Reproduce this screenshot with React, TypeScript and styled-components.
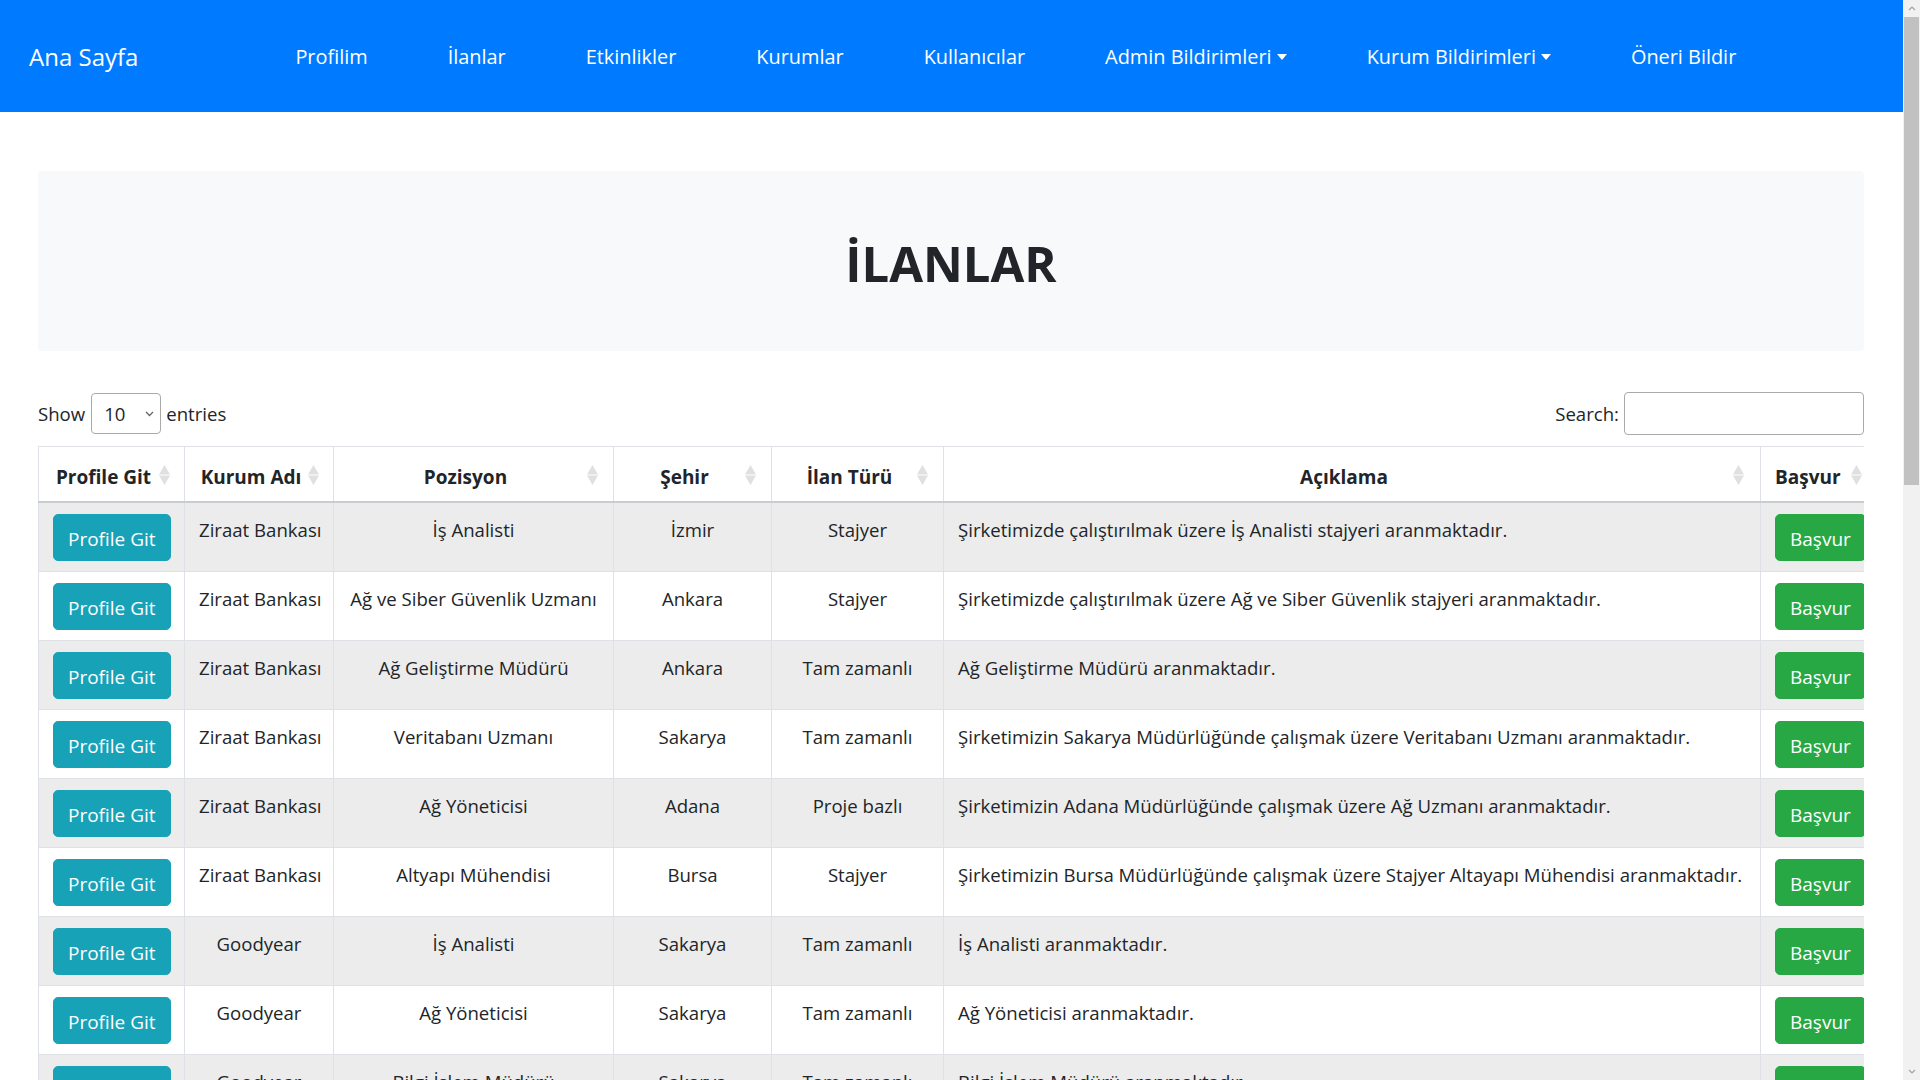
import React from "react";
import styled, { createGlobalStyle } from "styled-components";

const GlobalStyle = createGlobalStyle`
  body {
    margin: 0;
    font-family: "Open Sans", "Noto Sans", sans-serif;
    font-size: 18.6px;
    line-height: 1.5;
    color: #212529;
    background: #ffffff;
  }
  * {
    box-sizing: border-box;
  }
`;

const rows = [
  ["Ziraat Bankası", "İş Analisti", "İzmir", "Stajyer", "Şirketimizde çalıştırılmak üzere İş Analisti stajyeri aranmaktadır."],
  ["Ziraat Bankası", "Ağ ve Siber Güvenlik Uzmanı", "Ankara", "Stajyer", "Şirketimizde çalıştırılmak üzere Ağ ve Siber Güvenlik stajyeri aranmaktadır."],
  ["Ziraat Bankası", "Ağ Geliştirme Müdürü", "Ankara", "Tam zamanlı", "Ağ Geliştirme Müdürü aranmaktadır."],
  ["Ziraat Bankası", "Veritabanı Uzmanı", "Sakarya", "Tam zamanlı", "Şirketimizin Sakarya Müdürlüğünde çalışmak üzere Veritabanı Uzmanı aranmaktadır."],
  ["Ziraat Bankası", "Ağ Yöneticisi", "Adana", "Proje bazlı", "Şirketimizin Adana Müdürlüğünde çalışmak üzere Ağ Uzmanı aranmaktadır."],
  ["Ziraat Bankası", "Altyapı Mühendisi", "Bursa", "Stajyer", "Şirketimizin Bursa Müdürlüğünde çalışmak üzere Stajyer Altayapı Mühendisi aranmaktadır."],
  ["Goodyear", "İş Analisti", "Sakarya", "Tam zamanlı", "İş Analisti aranmaktadır."],
  ["Goodyear", "Ağ Yöneticisi", "Sakarya", "Tam zamanlı", "Ağ Yöneticisi aranmaktadır."],
  ["Goodyear", "Bilgi İşlem Müdürü", "Sakarya", "Tam zamanlı", "Bilgi İşlem Müdürü aranmaktadır."],
  ["Goodyear", "Yazılım Geliştirici", "Sakarya", "Stajyer", "Yazılım Geliştirici stajyeri aranmaktadır."],
];

const columns = [
  { title: "Profile Git", width: 146, iconRight: 14 },
  { title: "Kurum Adı", width: 149, iconRight: 14 },
  { title: "Pozisyon", width: 280, iconRight: 15 },
  { title: "Şehir", width: 158, iconRight: 15 },
  { title: "İlan Türü", width: 172, iconRight: 15 },
  { title: "Açıklama", width: 817, iconRight: 16 },
  { title: "Başvur", width: 104, iconRight: 2 },
];

const Page = styled.div`
  padding-right: 17px;
`;

const ScrollTrack = styled.div`
  position: fixed;
  top: 0;
  right: 0;
  bottom: 0;
  width: 17px;
  display: flex;
  flex-direction: column;
  background: #f1f1f1;
`;

const ScrollArrow = styled.div`
  display: flex;
  align-items: center;
  justify-content: center;
  height: 17px;
`;

const ScrollThumb = styled.div`
  height: 468px;
  margin: 0 1px;
  background: #c1c1c1;
`;

const ScrollRest = styled.div`
  flex: 1;
`;

const Navbar = styled.nav`
  display: flex;
  align-items: center;
  height: 112px;
  padding: 2px 29px 0;
  background-color: #007bff;
`;

const Brand = styled.a`
  font-size: 24px;
  color: #ffffff;
  margin-right: 157px;
  white-space: nowrap;
`;

const NavList = styled.ul`
  display: flex;
  align-items: center;
  gap: 80px;
  margin: 0;
  padding: 0;
  list-style: none;
`;

const NavLink = styled.a`
  font-size: 19.9px;
  color: #ffffff;
  white-space: nowrap;
`;

const Caret = styled.span`
  display: inline-block;
  margin-left: 5px;
  vertical-align: 4px;
  border-top: 6px solid #ffffff;
  border-left: 5px solid transparent;
  border-right: 5px solid transparent;
`;

const Main = styled.main`
  padding: 59px 39px 60px 38px;
`;

const Jumbotron = styled.section`
  display: flex;
  align-items: center;
  justify-content: center;
  height: 180px;
  padding-top: 4px;
  background-color: #f8f9fa;
  border-radius: 4px;
`;

const Title = styled.h1`
  margin: 0;
  font-size: 49px;
  font-weight: 700;
  line-height: 1.2;
  color: #212529;
`;

const Controls = styled.div`
  display: flex;
  align-items: center;
  justify-content: space-between;
  margin-top: 41px;
  margin-bottom: 11px;
  height: 43px;
`;

const ControlLabel = styled.label`
  display: flex;
  align-items: center;
  gap: 5px;
  white-space: nowrap;
`;

const FakeSelect = styled.div`
  display: flex;
  align-items: center;
  justify-content: space-between;
  width: 70px;
  height: 41px;
  margin-left: 1px;
  padding: 0 6px 0 12px;
  border: 1px solid #aaaaaa;
  border-radius: 4px;
  background: #ffffff;
`;

const SearchInput = styled.input`
  width: 240px;
  height: 43px;
  border: 1px solid #aaaaaa;
  border-radius: 4px;
  padding: 0 8px;
  font: inherit;
  outline: none;
`;

const TableWrap = styled.div`
  overflow: hidden;
`;

const Table = styled.table`
  width: 100%;
  table-layout: fixed;
  border-collapse: collapse;
  border: 1px solid #dee2e6;
`;

const HeadCell = styled.th`
  position: relative;
  padding: 16px 30px 9px 14px;
  border: 1px solid #dee2e6;
  border-bottom: 2px solid #c9ccd0;
  font-size: 19px;
  font-weight: 700;
  text-align: center;
  white-space: nowrap;
  background: #ffffff;
`;

const SortIcon = styled.svg<{ $right: number }>`
  position: absolute;
  right: ${(p) => p.$right}px;
  top: 50%;
  margin-top: -9px;
`;

const Row = styled.tr<{ $striped: boolean }>`
  background-color: ${(p) => (p.$striped ? "#ececec" : "#ffffff")};
`;

const Cell = styled.td<{ $left?: boolean }>`
  padding: 13px 14px 10px;
  border: 1px solid #dee2e6;
  vertical-align: top;
  white-space: nowrap;
  text-align: ${(p) => (p.$left ? "left" : "center")};
`;

const Button = styled.button<{ $variant: "info" | "success" }>`
  display: block;
  width: max-content;
  height: 47px;
  margin-top: -2px;
  padding: 3px 14px 0;
  border: 1px solid ${(p) => (p.$variant === "info" ? "#17a2b8" : "#28a745")};
  border-radius: 5px;
  background-color: ${(p) => (p.$variant === "info" ? "#17a2b8" : "#28a745")};
  color: #ffffff;
  font-family: inherit;
  font-size: 19px;
  cursor: pointer;
`;

const Sort = ({ right }: { right: number }) => (
  <SortIcon $right={right} width="11" height="20" viewBox="0 0 11 20">
    <path d="M5.5 0 L11 9.6 L0 9.6 Z" fill="#e0e0e0" />
    <path d="M0 10.4 L11 10.4 L5.5 20 Z" fill="#e0e0e0" />
  </SortIcon>
);

const Chevron = () => (
  <svg width="9" height="6" viewBox="0 0 9 6">
    <path d="M1 1 L4.5 4.5 L8 1" stroke="#666" strokeWidth="1.3" fill="none" />
  </svg>
);

const ArrowIcon = ({ down }: { down?: boolean }) => (
  <svg width="8" height="5" viewBox="0 0 8 5">
    <path d={down ? "M1 1 L4 4 L7 1" : "M1 4 L4 1 L7 4"} stroke="#a3a3a3" strokeWidth="1.2" fill="none" />
  </svg>
);

export default function App() {
  return (
    <Page>
      <GlobalStyle />
      <Navbar>
        <Brand>Ana Sayfa</Brand>
        <NavList>
          <li><NavLink>Profilim</NavLink></li>
          <li><NavLink>İlanlar</NavLink></li>
          <li><NavLink>Etkinlikler</NavLink></li>
          <li><NavLink>Kurumlar</NavLink></li>
          <li><NavLink>Kullanıcılar</NavLink></li>
          <li><NavLink>Admin Bildirimleri<Caret /></NavLink></li>
          <li><NavLink>Kurum Bildirimleri<Caret /></NavLink></li>
          <li><NavLink>Öneri Bildir</NavLink></li>
        </NavList>
      </Navbar>
      <Main>
        <Jumbotron>
          <Title>İLANLAR</Title>
        </Jumbotron>
        <Controls>
          <ControlLabel>
            Show
            <FakeSelect>
              10
              <Chevron />
            </FakeSelect>
            entries
          </ControlLabel>
          <ControlLabel>
            Search:
            <SearchInput type="search" />
          </ControlLabel>
        </Controls>
        <TableWrap>
          <Table>
            <colgroup>
              {columns.map((c) => (
                <col key={c.title} style={{ width: c.width }} />
              ))}
            </colgroup>
            <thead>
              <tr>
                {columns.map((c) => (
                  <HeadCell key={c.title}>
                    {c.title}
                    <Sort right={c.iconRight} />
                  </HeadCell>
                ))}
              </tr>
            </thead>
            <tbody>
              {rows.map((r, i) => (
                <Row key={i} $striped={i % 2 === 0}>
                  <Cell>
                    <Button $variant="info">Profile Git</Button>
                  </Cell>
                  <Cell>{r[0]}</Cell>
                  <Cell>{r[1]}</Cell>
                  <Cell>{r[2]}</Cell>
                  <Cell>{r[3]}</Cell>
                  <Cell $left>{r[4]}</Cell>
                  <Cell>
                    <Button $variant="success">Başvur</Button>
                  </Cell>
                </Row>
              ))}
            </tbody>
          </Table>
        </TableWrap>
      </Main>
      <ScrollTrack>
        <ScrollArrow>
          <ArrowIcon />
        </ScrollArrow>
        <ScrollThumb />
        <ScrollRest />
        <ScrollArrow>
          <ArrowIcon down />
        </ScrollArrow>
      </ScrollTrack>
    </Page>
  );
}
